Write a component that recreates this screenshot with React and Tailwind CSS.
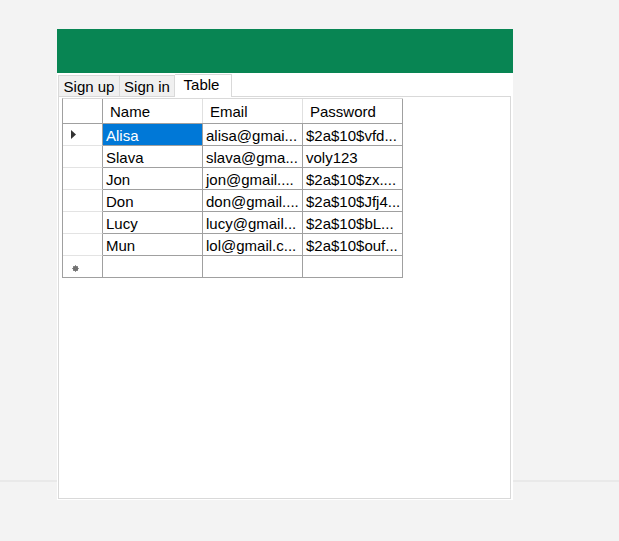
const rows = [
  { name: 'Alisa', email: 'alisa@gmai...', password: '$2a$10$vfd...', current: true },
  { name: 'Slava', email: 'slava@gma...', password: 'voly123' },
  { name: 'Jon', email: 'jon@gmail....', password: '$2a$10$zx....' },
  { name: 'Don', email: 'don@gmail....', password: '$2a$10$Jfj4...' },
  { name: 'Lucy', email: 'lucy@gmail...', password: '$2a$10$bL...' },
  { name: 'Mun', email: 'lol@gmail.c...', password: '$2a$10$ouf...' },
];

const HeaderCell = ({ children, className = '' }) => (
  <div className={`h-full flex items-center border-r border-[#e0e0e0] pl-[7px] pt-[3px] ${className}`}>
    {children}
  </div>
);

const Cell = ({ children, selected }) => (
  <div
    className={`w-[100px] h-full flex items-center border-r border-b border-[#a0a0a0] pl-[3px] pt-[3px] whitespace-nowrap overflow-hidden ${
      selected ? 'bg-[#0078d7] text-white' : ''
    }`}
  >
    {children}
  </div>
);

const RowHeader = ({ children, last }) => (
  <div
    className={`w-[40px] h-full flex items-center pl-[7px] border-r border-[#a0a0a0] ${
      last ? 'border-b border-b-[#a0a0a0]' : 'border-b border-b-[#e3e3e3]'
    }`}
  >
    {children}
  </div>
);

const App = () => {
  return (
    <div
      className="relative w-[619px] h-[541px] bg-[#f3f3f3] text-[15px] text-black overflow-hidden"
      style={{ fontFamily: '"Liberation Sans", Arial, sans-serif' }}
    >
      <div className="h-[480px]" />
      <div className="h-[2px] bg-[#e9e9e9]" />

      {/* window */}
      <div className="absolute left-[57px] top-[29px] w-[456px] h-[471px] bg-white flex flex-col">
        <div className="h-[44px] bg-[#088553]" />

        {/* tabs */}
        <div className="h-[23px] flex items-end pl-[1px] leading-none">
          <div className="h-[21px] w-[62px] bg-[#f0f0f0] border border-b-0 border-[#d9d9d9] flex items-center justify-center">
            Sign up
          </div>
          <div className="h-[21px] w-[55px] bg-[#f0f0f0] border border-l-0 border-b-0 border-[#d9d9d9] flex items-center justify-center">
            Sign in
          </div>
          <div className="h-[23px] w-[57px] bg-white border border-l-0 border-b-0 border-[#d9d9d9] flex items-center justify-center pb-[3px] pr-[3px] -mb-[1px] relative z-10">
            Table
          </div>
        </div>

        {/* tab page */}
        <div className="flex-1 ml-[1px] mr-[2px] mb-[1px] border border-[#d9d9d9] pl-[3px] pt-[1px]">
          <div className="w-[341px] border-l border-t border-l-[#a0a0a0] border-t-[#d9d9d9]">
            <div className="h-[25px] flex border-b border-[#a0a0a0]">
              <div className="w-[40px] h-full border-r border-[#a0a0a0]" />
              <HeaderCell className="w-[100px]">Name</HeaderCell>
              <HeaderCell className="w-[100px]">Email</HeaderCell>
              <HeaderCell className="w-[100px] border-r-[#a0a0a0]">Password</HeaderCell>
            </div>

            {rows.map((r) => (
              <div key={r.name} className="h-[22px] flex">
                <RowHeader>
                  {r.current && (
                    <svg width="6" height="9" viewBox="0 0 6 9" className="ml-[1px]">
                      <path d="M0 0 L5 4.5 L0 9 Z" fill="#333" />
                    </svg>
                  )}
                </RowHeader>
                <Cell selected={r.current}>{r.name}</Cell>
                <Cell>{r.email}</Cell>
                <Cell>{r.password}</Cell>
              </div>
            ))}

            <div className="h-[22px] flex">
              <RowHeader last>
                <svg width="7" height="7" viewBox="0 0 7 7" className="ml-[2px] mt-[3px]">
                  <circle cx="3.5" cy="3.5" r="2.5" fill="#555" />
                  <path d="M3.5 0 V7 M0 3.5 H7 M1 1 L6 6 M6 1 L1 6" stroke="#777" strokeWidth="0.8" />
                </svg>
              </RowHeader>
              <Cell />
              <Cell />
              <Cell />
            </div>
          </div>
        </div>
      </div>
    </div>
  );
};

export default App;
